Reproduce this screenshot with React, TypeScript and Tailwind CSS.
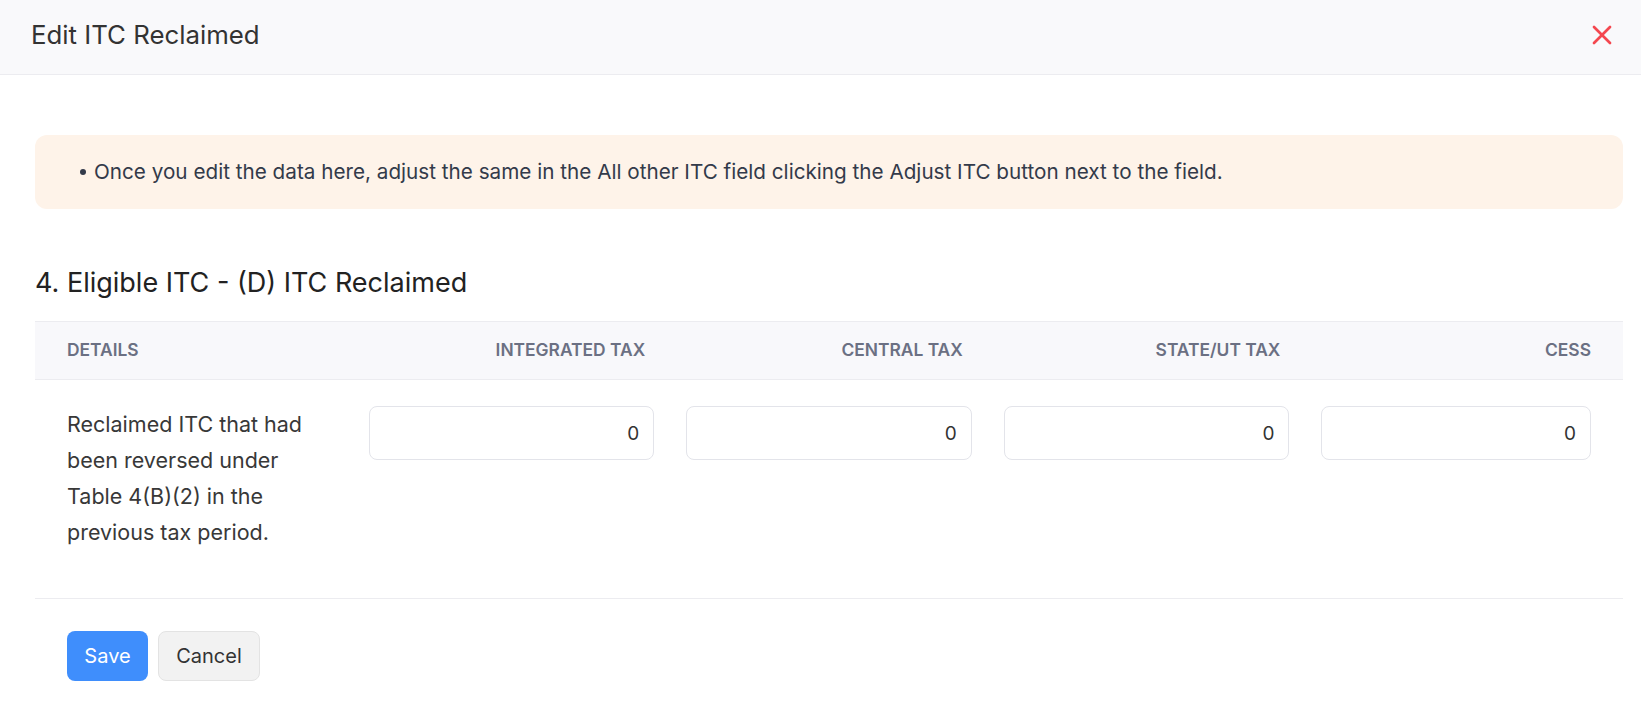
import { X } from 'lucide-react'

const columns = ['Integrated Tax', 'Central Tax', 'State/UT Tax', 'Cess']

const AmountInput = ({ value }: { value: string }) => (
  <input
    readOnly
    value={value}
    className="h-[54px] w-full rounded-lg border border-[#e3e4ea] bg-white px-[14px] text-right text-[19px] text-[#333] outline-none"
  />
)

export default function App() {
  return (
    <div className="min-h-[703px] bg-white font-['Inter',sans-serif] text-[#333]">
      <header className="flex h-[75px] items-center justify-between border-b border-[#ececf0] bg-[#f9f9fb] pb-[4px] pl-[31px] pr-[23px]">
        <h1 className="text-[25.8px] font-normal leading-[34px] text-[#333]">Edit ITC Reclaimed</h1>
        <button className="text-[#f4474f]">
          <X size={32} strokeWidth={2} />
        </button>
      </header>

      <div className="pl-[35px] pr-[18px] pt-[60px]">
        <div className="flex h-[74px] items-center gap-[8px] rounded-xl bg-[#fef3e9] pl-[45px]">
          <span className="h-[6px] w-[6px] rounded-full bg-[#333a4a]" />
          <p className="text-[20.7px] text-[#333a4a]">
            Once you edit the data here, adjust the same in the All other ITC field clicking the Adjust ITC button next to the field.
          </p>
        </div>

        <h2 className="mt-[56px] text-[27px] font-normal leading-[36px] text-[#222]">4. Eligible ITC - (D) ITC Reclaimed</h2>

        <div className="mt-[20px]">
          <div className="grid h-[59px] grid-cols-5 items-center border-y border-[#ececf0] bg-[#f8f8fb] text-[17.4px] font-semibold uppercase text-[#6b7083]">
            <div className="pl-8">Details</div>
            {columns.map((c, i) => (
              <div key={c} className={i === columns.length - 1 ? 'pr-8 text-right' : 'pr-[25px] text-right'}>
                {c}
              </div>
            ))}
          </div>

          <div className="grid grid-cols-5 border-b border-[#ececf0] pb-[48px] pt-[26px]">
            <div className="pl-8 pr-4 text-[21.5px] leading-[36px] text-[#383838]">
              Reclaimed ITC that had been reversed under Table 4(B)(2) in the previous tax period.
            </div>
            {columns.map((c, i) => (
              <div key={c} className={i === columns.length - 1 ? 'pl-4 pr-8' : 'px-4'}>
                <AmountInput value="0" />
              </div>
            ))}
          </div>
        </div>

        <div className="flex gap-[10px] pl-8 pt-[32px]">
          <button className="h-[50px] w-[81px] rounded-lg bg-[#3f8efc] text-[20px] text-white">Save</button>
          <button className="h-[50px] w-[102px] rounded-lg border border-[#e3e3e3] bg-[#f2f2f2] text-[20px] text-[#333]">Cancel</button>
        </div>
      </div>
    </div>
  )
}
